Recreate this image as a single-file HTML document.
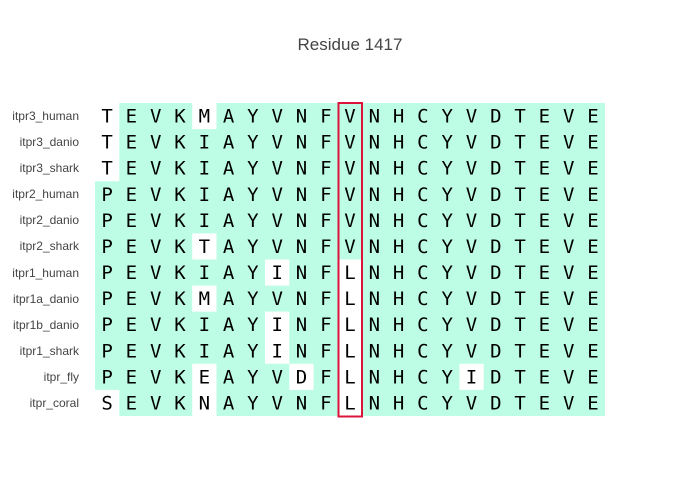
<!DOCTYPE html>
<html><head><meta charset="utf-8"><style>html,body{margin:0;padding:0;background:#fff;width:700px;height:500px;overflow:hidden}</style></head>
<body>
<svg width="700" height="500" xmlns="http://www.w3.org/2000/svg">
<text x="350" y="50" text-anchor="middle" font-family="Liberation Sans, sans-serif" font-size="17" fill="#444">Residue 1417</text>
<g fill="#bdfde5">
<rect x="95" y="103" width="510" height="313"/>
</g>
<g fill="#fff">
<rect x="95" y="103" width="24.3" height="78.3"/>
<rect x="192.2" y="103" width="24.3" height="26.1"/>
<rect x="192.2" y="233.4" width="24.3" height="26.1"/>
<rect x="265" y="259.5" width="24.3" height="26.1"/>
<rect x="338" y="259.5" width="24.3" height="156.5"/>
<rect x="192.2" y="285.6" width="24.3" height="26.1"/>
<rect x="265" y="311.6" width="24.3" height="52.2"/>
<rect x="192.2" y="363.8" width="24.3" height="52.2"/>
<rect x="289.3" y="363.8" width="24.3" height="26.1"/>
<rect x="459.4" y="363.8" width="24.3" height="26.1"/>
<rect x="95" y="389.9" width="24.3" height="26.1"/>
</g>
<rect x="338.5" y="103" width="23.5" height="313.5" fill="none" stroke="#dc143c" stroke-width="2"/>
<g font-family="Liberation Sans, sans-serif" font-size="12" fill="#444" text-anchor="end">
<text x="79" y="120">itpr3_human</text>
<text x="79" y="146">itpr3_danio</text>
<text x="79" y="172">itpr3_shark</text>
<text x="79" y="198">itpr2_human</text>
<text x="79" y="224">itpr2_danio</text>
<text x="79" y="250">itpr2_shark</text>
<text x="79" y="277">itpr1_human</text>
<text x="79" y="303">itpr1a_danio</text>
<text x="79" y="329">itpr1b_danio</text>
<text x="79" y="355">itpr1_shark</text>
<text x="79" y="381">itpr_fly</text>
<text x="79" y="407">itpr_coral</text>
</g>
<g font-family="DejaVu Sans Mono, monospace" font-size="19" fill="#000" text-anchor="middle">
<text y="122.5" x="107.1 131.4 155.7 180.0 204.3 228.6 252.9 277.2 301.5 325.8 350.0 374.3 398.6 422.9 447.2 471.5 495.8 520.1 544.4 568.7 593.0">TEVKMAYVNFVNHCYVDTEVE</text>
<text y="148.6" x="107.1 131.4 155.7 180.0 204.3 228.6 252.9 277.2 301.5 325.8 350.0 374.3 398.6 422.9 447.2 471.5 495.8 520.1 544.4 568.7 593.0">TEVKIAYVNFVNHCYVDTEVE</text>
<text y="174.7" x="107.1 131.4 155.7 180.0 204.3 228.6 252.9 277.2 301.5 325.8 350.0 374.3 398.6 422.9 447.2 471.5 495.8 520.1 544.4 568.7 593.0">TEVKIAYVNFVNHCYVDTEVE</text>
<text y="200.8" x="107.1 131.4 155.7 180.0 204.3 228.6 252.9 277.2 301.5 325.8 350.0 374.3 398.6 422.9 447.2 471.5 495.8 520.1 544.4 568.7 593.0">PEVKIAYVNFVNHCYVDTEVE</text>
<text y="226.9" x="107.1 131.4 155.7 180.0 204.3 228.6 252.9 277.2 301.5 325.8 350.0 374.3 398.6 422.9 447.2 471.5 495.8 520.1 544.4 568.7 593.0">PEVKIAYVNFVNHCYVDTEVE</text>
<text y="253.0" x="107.1 131.4 155.7 180.0 204.3 228.6 252.9 277.2 301.5 325.8 350.0 374.3 398.6 422.9 447.2 471.5 495.8 520.1 544.4 568.7 593.0">PEVKTAYVNFVNHCYVDTEVE</text>
<text y="279.1" x="107.1 131.4 155.7 180.0 204.3 228.6 252.9 277.2 301.5 325.8 350.0 374.3 398.6 422.9 447.2 471.5 495.8 520.1 544.4 568.7 593.0">PEVKIAYINFLNHCYVDTEVE</text>
<text y="305.1" x="107.1 131.4 155.7 180.0 204.3 228.6 252.9 277.2 301.5 325.8 350.0 374.3 398.6 422.9 447.2 471.5 495.8 520.1 544.4 568.7 593.0">PEVKMAYVNFLNHCYVDTEVE</text>
<text y="331.2" x="107.1 131.4 155.7 180.0 204.3 228.6 252.9 277.2 301.5 325.8 350.0 374.3 398.6 422.9 447.2 471.5 495.8 520.1 544.4 568.7 593.0">PEVKIAYINFLNHCYVDTEVE</text>
<text y="357.3" x="107.1 131.4 155.7 180.0 204.3 228.6 252.9 277.2 301.5 325.8 350.0 374.3 398.6 422.9 447.2 471.5 495.8 520.1 544.4 568.7 593.0">PEVKIAYINFLNHCYVDTEVE</text>
<text y="383.4" x="107.1 131.4 155.7 180.0 204.3 228.6 252.9 277.2 301.5 325.8 350.0 374.3 398.6 422.9 447.2 471.5 495.8 520.1 544.4 568.7 593.0">PEVKEAYVDFLNHCYIDTEVE</text>
<text y="409.5" x="107.1 131.4 155.7 180.0 204.3 228.6 252.9 277.2 301.5 325.8 350.0 374.3 398.6 422.9 447.2 471.5 495.8 520.1 544.4 568.7 593.0">SEVKNAYVNFLNHCYVDTEVE</text>
</g>
</svg>
</body></html>
